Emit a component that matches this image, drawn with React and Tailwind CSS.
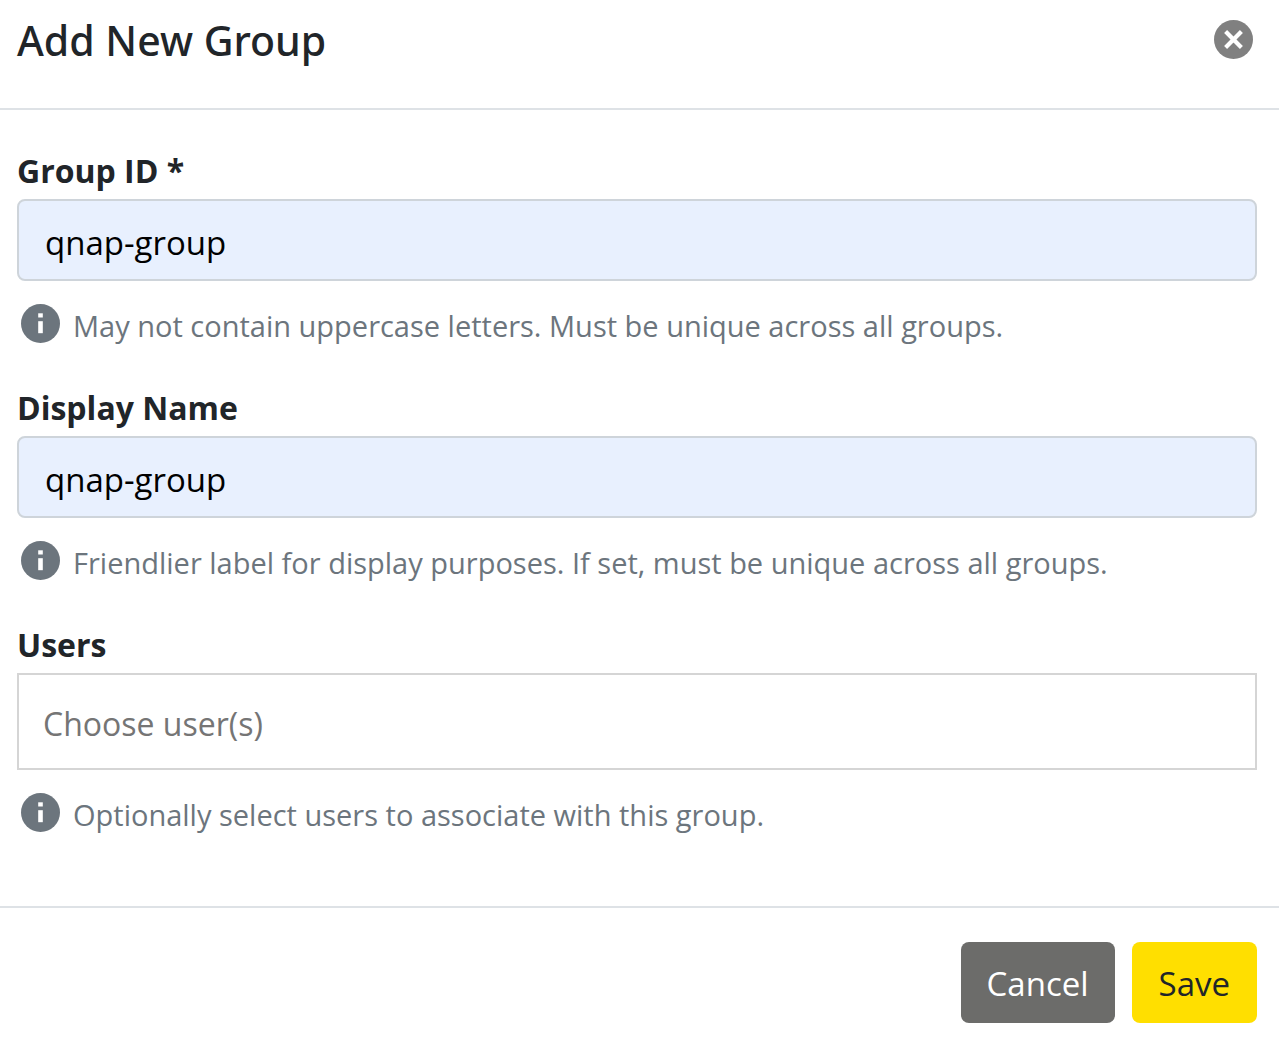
import React from "react";

function InfoIcon() {
  return (
    <svg className="mb-[5px] size-[39px] shrink-0" viewBox="0 0 39 39" aria-hidden="true">
      <circle cx="19.5" cy="19.5" r="19.5" fill="#6c757d" />
      <rect x="17.2" y="9.3" width="4.6" height="4.2" fill="#fff" />
      <rect x="17.2" y="17.2" width="4.6" height="12" fill="#fff" />
    </svg>
  );
}

function Field({ id, label, hint, className, ...rest }) {
  return (
    <div>
      <label htmlFor={id} className="mb-[6px] block text-[32px] leading-[44px] font-bold">
        {label}
      </label>
      <input id={id} type="text" aria-describedby={id + "-hint"} className={"block w-full border-2 outline-none " + className} {...rest} />
      <div className="mt-[23px] ml-1 flex items-center gap-[13px]">
        <InfoIcon />
        <p id={id + "-hint"} className="text-[29px] leading-[44px] text-[#6c757d]">
          {hint}
        </p>
      </div>
    </div>
  );
}

const filled = "h-[82px] rounded-lg border-[#ced4da] bg-[#e8f0fe] px-[26px] pt-1 text-[33px] text-black";

export default function App() {
  return (
    <form className="min-h-screen bg-white font-['Open_Sans',sans-serif] text-[#212529]" onSubmit={(e) => e.preventDefault()}>
      <header className="flex h-[110px] items-start justify-between border-b-2 border-[#dee2e6] pt-[10px] pr-[26px] pl-[17px]">
        <h1 className="font-['Noto_Sans',sans-serif] text-[41px] leading-[60px] font-medium">Add New Group</h1>
        <button type="button" aria-label="Close" className="mt-[10px]">
          <svg className="size-[39px]" viewBox="0 0 39 39" aria-hidden="true">
            <circle cx="19.5" cy="19.5" r="19.5" fill="#808080" />
            <path d="M11.6 11.6L27.4 27.4M27.4 11.6L11.6 27.4" stroke="#fff" strokeWidth="4.2" />
          </svg>
        </button>
      </header>
      <main className="flex flex-col gap-[38px] pt-[39px] pr-[22px] pb-[69px] pl-[17px]">
        <Field id="group-id" label="Group ID *" hint="May not contain uppercase letters. Must be unique across all groups." defaultValue="qnap-group" required className={filled} />
        <Field id="display-name" label="Display Name" hint="Friendlier label for display purposes. If set, must be unique across all groups." defaultValue="qnap-group" className={filled} />
        <Field id="users" label="Users" hint="Optionally select users to associate with this group." placeholder="Choose user(s)" className="h-[97px] border-[#d5d5d5] px-6 pt-1 text-[32px] placeholder:text-[#757575]" />
      </main>
      <footer className="flex justify-end gap-[17px] border-t-2 border-[#dee2e6] pt-[34px] pr-[22px] pb-[19px]">
        <button type="button" className="h-[81px] rounded-lg bg-[#6c6c6a] px-[26px] pt-[2px] text-[33px] text-white">Cancel</button>
        <button type="submit" className="h-[81px] rounded-lg bg-[#ffdf00] px-[27px] pt-[2px] text-[33px]">Save</button>
      </footer>
    </form>
  );
}
